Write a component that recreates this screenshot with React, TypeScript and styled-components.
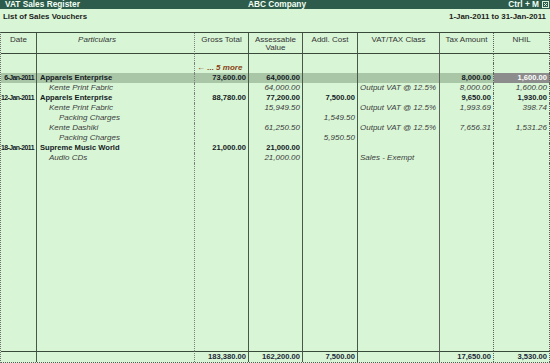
import styled, { createGlobalStyle } from "styled-components";

const GlobalStyle = createGlobalStyle`
  html, body {
    margin: 0;
    padding: 0;
    background: #d8f6d6;
  }
  body {
    font-family: "Liberation Sans", Arial, sans-serif;
  }
`;

type Tone = "head" | "bold" | "item" | "more" | "total" | "plain";

const COLUMNS = [
  { width: "36px", border: "solid #485848" },
  { width: "158px", border: "dotted #7a807a" },
  { width: "54px", border: "solid #485848" },
  { width: "54px", border: "solid #485848" },
  { width: "55px", border: "solid #485848" },
  { width: "82px", border: "solid #5a625a" },
  { width: "54px", border: "dotted #5a625a" },
  { width: "56px", border: "dotted #5a625a" },
];

const ALIGN: ("left" | "right" | "center")[] = [
  "right",
  "left",
  "right",
  "right",
  "right",
  "left",
  "right",
  "right",
];

type Line = {
  kind: "voucher" | "item";
  level?: number;
  selected?: boolean;
  values: string[];
};

const LINES: Line[] = [
  {
    kind: "voucher",
    selected: true,
    values: ["6-Jan-2011", "Apparels Enterprise", "73,600.00", "64,000.00", "", "", "8,000.00", "1,600.00"],
  },
  {
    kind: "item",
    level: 1,
    values: ["", "Kente Print Fabric", "", "64,000.00", "", "Output VAT @ 12.5%", "8,000.00", "1,600.00"],
  },
  {
    kind: "voucher",
    values: ["12-Jan-2011", "Apparels Enterprise", "88,780.00", "77,200.00", "7,500.00", "", "9,650.00", "1,930.00"],
  },
  {
    kind: "item",
    level: 1,
    values: ["", "Kente Print Fabric", "", "15,949.50", "", "Output VAT @ 12.5%", "1,993.69", "398.74"],
  },
  {
    kind: "item",
    level: 2,
    values: ["", "Packing Charges", "", "", "1,549.50", "", "", ""],
  },
  {
    kind: "item",
    level: 1,
    values: ["", "Kente Dashiki", "", "61,250.50", "", "Output VAT @ 12.5%", "7,656.31", "1,531.26"],
  },
  {
    kind: "item",
    level: 2,
    values: ["", "Packing Charges", "", "", "5,950.50", "", "", ""],
  },
  {
    kind: "voucher",
    values: ["18-Jan-2011", "Supreme Music World", "21,000.00", "21,000.00", "", "", "", ""],
  },
  {
    kind: "item",
    level: 1,
    values: ["", "Audio CDs", "", "21,000.00", "", "Sales - Exempt", "", ""],
  },
];

const TOTALS = ["", "", "183,380.00", "162,200.00", "7,500.00", "", "17,650.00", "3,530.00"];

const Screen = styled.div`
  width: 550px;
  height: 363px;
  display: flex;
  flex-direction: column;
  background: #d8f6d6;
  overflow: hidden;
`;

const TitleBar = styled.div`
  height: 9px;
  display: grid;
  grid-template-columns: 1fr auto 1fr;
  align-items: center;
  padding: 0 1px 0 5px;
  background: #2e5c4c;
  color: #f2fff2;
  font-size: 8.3px;
  font-weight: bold;
  line-height: 9px;
`;

const TitleRight = styled.div`
  display: flex;
  justify-content: flex-end;
  align-items: center;
  gap: 3px;
`;

const CloseBox = styled.svg`
  width: 7px;
  height: 7px;
  display: block;
`;

const SubHeader = styled.div`
  height: 20px;
  padding: 3px 4px 0 3px;
  display: flex;
  justify-content: space-between;
  align-items: flex-start;
  font-size: 7.9px;
  font-weight: bold;
  line-height: 10px;
  color: #1c1c1c;
`;

const Table = styled.div`
  flex: 1;
  display: grid;
  grid-template-columns: ${COLUMNS.map((c) => c.width).join(" ")};
  grid-template-rows: 21px 9px 10px repeat(${LINES.length}, 10px) 1fr 11px;
  border-top: 1px solid #3a4a3a;
  border-bottom: 1px dotted #5a5a5a;
  border-left: 1px dotted #707070;
`;

const Cell = styled.div<{
  $col: number;
  $tone: Tone;
  $align: "left" | "right" | "center";
  $indent?: number;
  $bg?: string;
}>`
  border-right: 1px ${(p) => COLUMNS[p.$col].border};
  background: ${(p) => p.$bg ?? "transparent"};
  font-size: ${(p) => (p.$tone === "bold" || p.$tone === "total" ? "7.6px" : "8px")};
  font-weight: ${(p) => (p.$tone === "bold" || p.$tone === "total" || p.$tone === "more" ? "bold" : "normal")};
  font-style: ${(p) => (p.$tone === "item" || p.$tone === "more" ? "italic" : "normal")};
  color: ${(p) =>
    p.$tone === "item"
      ? "#3c3c3c"
      : p.$tone === "more"
      ? "#8a3e14"
      : p.$tone === "total"
      ? "#1a2638"
      : p.$tone === "head"
      ? "#333"
      : "#141a24"};
  text-align: ${(p) => p.$align};
  line-height: 10px;
  white-space: nowrap;
  overflow: visible;
  padding: ${(p) =>
    p.$align === "right" ? "0 2px 0 0" : p.$align === "left" ? `0 0 0 ${p.$indent ?? 2}px` : "0"};
`;

const HeadCell = styled.div<{ $col: number; $italic?: boolean; $shift?: number }>`
  border-right: 1px ${(p) => COLUMNS[p.$col].border};
  border-bottom: 1px solid #3a4a3a;
  padding: 3px ${(p) => p.$shift ?? 0}px 0 0;
  font-size: 8px;
  font-style: ${(p) => (p.$italic ? "italic" : "normal")};
  color: #333;
  text-align: center;
  line-height: 8px;
`;

const DateText = styled.span`
  font-size: 6.9px;
  letter-spacing: -0.55px;
`;

const TotalCell = styled(Cell)`
  border-top: 1px solid #3a4a3a;
`;

function App() {
  return (
    <>
      <GlobalStyle />
      <Screen>
        <TitleBar>
          <span>VAT Sales Register</span>
          <span>ABC Company</span>
          <TitleRight>
            <span>Ctrl + M</span>
            <CloseBox viewBox="0 0 7 7">
              <rect x="0.5" y="0.5" width="6" height="6" fill="#2e5c4c" stroke="#d8f0d8" strokeWidth="1" />
              <path d="M2 2 L5 5 M5 2 L2 5" stroke="#d8f0d8" strokeWidth="1" />
            </CloseBox>
          </TitleRight>
        </TitleBar>

        <SubHeader>
          <span>List of Sales Vouchers</span>
          <span>1-Jan-2011 to 31-Jan-2011</span>
        </SubHeader>

        <Table>
          <HeadCell $col={0}>Date</HeadCell>
          <HeadCell $col={1} $italic $shift={37}>
            Particulars
          </HeadCell>
          <HeadCell $col={2}>Gross Total</HeadCell>
          <HeadCell $col={3}>
            Assessable
            <br />
            Value
          </HeadCell>
          <HeadCell $col={4}>Addl. Cost</HeadCell>
          <HeadCell $col={5}>VAT/TAX Class</HeadCell>
          <HeadCell $col={6}>Tax Amount</HeadCell>
          <HeadCell $col={7}>NHIL</HeadCell>

          {COLUMNS.map((_, i) => (
            <Cell key={`gap-${i}`} $col={i} $tone="plain" $align="left" />
          ))}

          {COLUMNS.map((_, i) => (
            <Cell key={`more-${i}`} $col={i} $tone="more" $align="left" $indent={2}>
              {i === 2 ? "← ... 5 more" : ""}
            </Cell>
          ))}

          {LINES.map((line, r) =>
            line.values.map((v, i) => {
              const isParticular = i === 1;
              const indent = isParticular
                ? line.kind === "voucher"
                  ? 3
                  : line.level === 2
                  ? 22
                  : 12
                : undefined;
              const tone: Tone = line.kind === "voucher" ? "bold" : "item";
              let bg: string | undefined;
              if (line.selected) bg = i === 7 ? "#8c8c8c" : "#a9c7a7";
              return (
                <Cell
                  key={`${r}-${i}`}
                  $col={i}
                  $tone={tone}
                  $align={ALIGN[i]}
                  $indent={indent}
                  $bg={bg}
                  style={line.selected && i === 7 ? { color: "#fff" } : undefined}
                >
                  {i === 0 && v ? <DateText>{v}</DateText> : v}
                </Cell>
              );
            })
          )}

          {COLUMNS.map((_, i) => (
            <Cell key={`fill-${i}`} $col={i} $tone="plain" $align="left" />
          ))}

          {TOTALS.map((v, i) => (
            <TotalCell key={`tot-${i}`} $col={i} $tone="total" $align={ALIGN[i]}>
              {v}
            </TotalCell>
          ))}
        </Table>
      </Screen>
    </>
  );
}

export default App;
